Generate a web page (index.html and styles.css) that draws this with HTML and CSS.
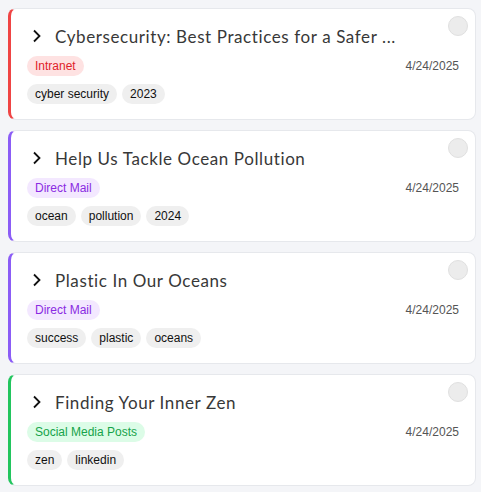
FILE: index.html
```html
<!DOCTYPE html>
<html>
<head>
<meta charset="utf-8">
<link rel="stylesheet" href="styles.css">
</head>
<body>
<div class="list">
  <div class="card red">
    <span class="check"></span>
    <div class="title-row">
      <svg class="chev" width="20" height="20" viewBox="0 0 20 20"><path d="M7 4.5 L12.5 10 L7 15.5" fill="none" stroke="#111" stroke-width="1.8"/></svg>
      <span class="title">Cybersecurity: Best Practices for a Safer ...</span>
    </div>
    <div class="meta-row">
      <span class="badge b-red">Intranet</span>
      <span class="date">4/24/2025</span>
    </div>
    <div class="tags"><span class="tag">cyber security</span><span class="tag">2023</span></div>
  </div>
  <div class="card purple">
    <span class="check"></span>
    <div class="title-row">
      <svg class="chev" width="20" height="20" viewBox="0 0 20 20"><path d="M7 4.5 L12.5 10 L7 15.5" fill="none" stroke="#111" stroke-width="1.8"/></svg>
      <span class="title">Help Us Tackle Ocean Pollution</span>
    </div>
    <div class="meta-row">
      <span class="badge b-purple">Direct Mail</span>
      <span class="date">4/24/2025</span>
    </div>
    <div class="tags"><span class="tag">ocean</span><span class="tag">pollution</span><span class="tag">2024</span></div>
  </div>
  <div class="card purple">
    <span class="check"></span>
    <div class="title-row">
      <svg class="chev" width="20" height="20" viewBox="0 0 20 20"><path d="M7 4.5 L12.5 10 L7 15.5" fill="none" stroke="#111" stroke-width="1.8"/></svg>
      <span class="title">Plastic In Our Oceans</span>
    </div>
    <div class="meta-row">
      <span class="badge b-purple">Direct Mail</span>
      <span class="date">4/24/2025</span>
    </div>
    <div class="tags"><span class="tag">success</span><span class="tag">plastic</span><span class="tag">oceans</span></div>
  </div>
  <div class="card green">
    <span class="check"></span>
    <div class="title-row">
      <svg class="chev" width="20" height="20" viewBox="0 0 20 20"><path d="M7 4.5 L12.5 10 L7 15.5" fill="none" stroke="#111" stroke-width="1.8"/></svg>
      <span class="title">Finding Your Inner Zen</span>
    </div>
    <div class="meta-row">
      <span class="badge b-green">Social Media Posts</span>
      <span class="date">4/24/2025</span>
    </div>
    <div class="tags"><span class="tag">zen</span><span class="tag">linkedin</span></div>
  </div>
</div>
</body>
</html>
```
FILE: styles.css
```css
html, body {
  margin: 0;
  padding: 0;
  background: #f4f5f8;
}
body {
  font-family: "Liberation Sans", Arial, sans-serif;
}
.list {
  display: flex;
  flex-direction: column;
  gap: 10px;
  padding: 8px 5px 8px 8px;
}
.card {
  position: relative;
  background: #fff;
  border: 1px solid #e6e8ec;
  border-left: 3px solid #ef4444;
  border-radius: 8px;
  padding: 15px 16px 15px 16px;
  display: flex;
  flex-direction: column;
  height: 112px;
  box-sizing: border-box;
}
.card.red { border-left-color: #ef4444; }
.card.purple { border-left-color: #8b5cf6; }
.card.green { border-left-color: #22c55e; }
.check {
  position: absolute;
  top: 7px;
  right: 7px;
  width: 18px;
  height: 18px;
  border-radius: 50%;
  background: #ececec;
  border: 1px solid #e0e0e0;
}
.title-row {
  display: flex;
  align-items: center;
  gap: 8px;
  height: 24px;
}
.chev { display: block; flex: none; }
.title {
  font-family: "Lato", "Noto Sans", sans-serif;
  font-size: 17px;
  letter-spacing: 0.6px;
  color: #383838;
  white-space: nowrap;
}
.meta-row {
  display: flex;
  justify-content: space-between;
  align-items: center;
  margin-top: 8px;
  height: 20px;
}
.badge {
  font-size: 12px;
  line-height: 20px;
  height: 20px;
  padding: 0 8px;
  border-radius: 10px;
}
.b-red { background: #fee2e2; color: #e11d2a; }
.b-purple { background: #f3e8ff; color: #8a2be2; }
.b-green { background: #dcfce7; color: #16a34a; }
.date {
  font-size: 12px;
  color: #555;
}
.tags {
  display: flex;
  gap: 5px;
  margin-top: 8px;
}
.tag {
  font-size: 12px;
  line-height: 20px;
  height: 20px;
  padding: 0 8px;
  border-radius: 10px;
  background: #efefef;
  color: #111;
}
```
